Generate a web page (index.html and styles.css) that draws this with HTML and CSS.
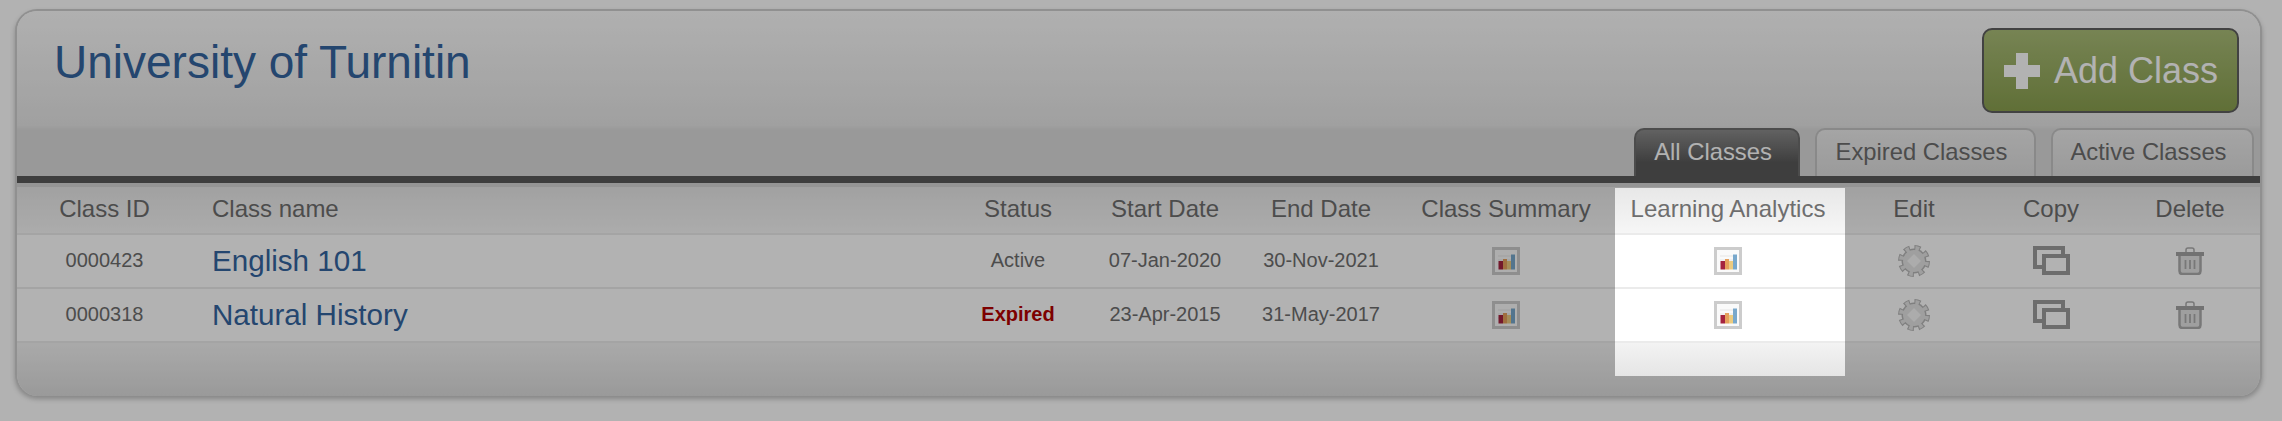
FILE: index.html
```html
<!DOCTYPE html>
<html lang="en">
<head>
  <meta charset="UTF-8" />
  <title>University of Turnitin</title>
  <link rel="stylesheet" href="styles.css">
</head>
<body>
  <svg class="defs" width="0" height="0">
    <symbol id="chart" viewBox="0 0 28 28">
      <rect x="1.5" y="1.5" width="25" height="25" fill="#fafafa" stroke="#cccccc" stroke-width="3"/>
      <path d="M6 9h16M6 13h16M6 17h16" stroke="#e6e6e6" stroke-width="1"/>
      <rect x="6.5" y="14" width="4.5" height="8.5" fill="#a5233f"/>
      <rect x="11" y="12" width="4" height="10.5" fill="#e6a05c"/>
      <rect x="15" y="14" width="4" height="8.5" fill="#eccb80"/>
      <rect x="19" y="7.5" width="4" height="15" fill="#78a8cc"/>
    </symbol>
    <symbol id="gear" viewBox="0 0 32 32">
      <circle cx="16" cy="16" r="12.5" fill="none" stroke="#b7b7b7" stroke-width="7" stroke-dasharray="5.6 4.22"/>
      <circle cx="16" cy="16" r="12.5" fill="#b7b7b7" stroke="#e4e4e4" stroke-width="5" stroke-dasharray="3.6 6.22" stroke-dashoffset="-1"/>
      <circle cx="16" cy="16" r="11" fill="#e4e4e4"/>
      <path d="M16 9l7 7-7 7-7-7z" fill="#f6f6f6"/>
    </symbol>
    <symbol id="copy" viewBox="0 0 37 29">
      <path d="M9 21H2V2h28v6" fill="none" stroke="#9c9c9c" stroke-width="4"/>
      <rect x="11" y="10" width="24" height="17" fill="none" stroke="#9c9c9c" stroke-width="4"/>
    </symbol>
    <symbol id="trash" viewBox="0 0 28 28">
      <path d="M10 5V3q0-2 2-2h4q2 0 2 2v2" fill="none" stroke="#acacac" stroke-width="1.5"/>
      <rect x="0" y="5" width="28" height="4" fill="#a4a4a4"/>
      <path d="M3.5 9v15q0 3 3 3h15q3 0 3-3V9" fill="#e4e4e4" stroke="#acacac" stroke-width="2.5"/>
      <path d="M9.5 13v9M14 13v9M18.5 13v9" stroke="#acacac" stroke-width="1.8"/>
    </symbol>
  </svg>

  <div class="panel">
    <div class="panel-head">
      <div class="title-row">
        <h1>University of Turnitin</h1>
        <a class="add-btn" href="#"><span class="plus"></span>Add Class</a>
      </div>
      <div class="tabs">
        <a class="tab active" href="#">All Classes</a>
        <a class="tab tab-expired" href="#">Expired Classes</a>
        <a class="tab tab-current" href="#">Active Classes</a>
      </div>
    </div>

    <table class="classes">
      <colgroup>
        <col class="c-id"><col class="c-name"><col class="c-status"><col class="c-start"><col class="c-end">
        <col class="c-summary"><col class="c-analytics"><col class="c-edit"><col class="c-copy"><col class="c-delete">
      </colgroup>
      <thead>
        <tr>
          <th>Class ID</th>
          <th class="name">Class name</th>
          <th>Status</th>
          <th>Start Date</th>
          <th>End Date</th>
          <th>Class Summary</th>
          <th>Learning Analytics</th>
          <th>Edit</th>
          <th>Copy</th>
          <th>Delete</th>
        </tr>
      </thead>
      <tbody>
        <tr>
          <td>0000423</td>
          <td class="name"><a href="#">English 101</a></td>
          <td>Active</td>
          <td>07-Jan-2020</td>
          <td>30-Nov-2021</td>
          <td><svg class="ico-chart"><use href="#chart"/></svg></td>
          <td><svg class="ico-chart"><use href="#chart"/></svg></td>
          <td><svg class="ico-gear"><use href="#gear"/></svg></td>
          <td><svg class="ico-copy"><use href="#copy"/></svg></td>
          <td><svg class="ico-trash"><use href="#trash"/></svg></td>
        </tr>
        <tr>
          <td>0000318</td>
          <td class="name"><a href="#">Natural History</a></td>
          <td class="expired">Expired</td>
          <td>23-Apr-2015</td>
          <td>31-May-2017</td>
          <td><svg class="ico-chart"><use href="#chart"/></svg></td>
          <td><svg class="ico-chart"><use href="#chart"/></svg></td>
          <td><svg class="ico-gear"><use href="#gear"/></svg></td>
          <td><svg class="ico-copy"><use href="#copy"/></svg></td>
          <td><svg class="ico-trash"><use href="#trash"/></svg></td>
        </tr>
      </tbody>
    </table>
    <div class="panel-foot"></div>
  </div>

  <!-- dims everything on the page except the column it sits over -->
  <div class="spotlight"></div>
</body>
</html>
```

FILE: styles.css
```css
html, body {
  height: 100%;
}
body {
  margin: 0;
  padding: 9px 20px 0 15px;
  box-sizing: border-box;
  overflow: hidden;
  background: #fff;
  font-family: "Liberation Sans", Arial, sans-serif;
  color: #6e6e6e;
}
a {
  text-decoration: none;
}
.defs {
  position: absolute;
}

/* panel */
.panel {
  height: 387px;
  box-sizing: border-box;
  border: 2px solid #cfcfcf;
  border-bottom: none;
  border-radius: 22px;
  overflow: hidden;
  box-shadow: 0 3px 5px rgba(0,0,0,0.25);
  background: #fff;
}
.panel-head {
  height: 165px;
  padding-top: 17px;
  box-sizing: border-box;
  background: linear-gradient(#fcfcfc 0, #e6e6e6 114px, #dcdcdc 119px, #dbdbdb 100%);
}
.title-row {
  display: flex;
  justify-content: space-between;
  align-items: flex-start;
  padding: 0 21px 0 37px;
}
h1 {
  margin: 8px 0 0;
  font-size: 46px;
  line-height: 52px;
  font-weight: normal;
  color: #34659f;
}
.add-btn {
  display: flex;
  align-items: center;
  box-sizing: border-box;
  width: 257px;
  height: 85px;
  padding-left: 20px;
  border: 2px solid #5f5f5f;
  border-radius: 10px;
  background: linear-gradient(#aabd78, #8aa04f);
  color: #fff;
  font-size: 36px;
}
.plus {
  position: relative;
  width: 36px;
  height: 36px;
  margin-right: 14px;
}
.plus::before, .plus::after {
  content: "";
  position: absolute;
  background: #fff;
}
.plus::before {
  left: 12px;
  top: 0;
  width: 12px;
  height: 36px;
}
.plus::after {
  left: 0;
  top: 12px;
  width: 36px;
  height: 12px;
}

/* tabs */
.tabs {
  display: flex;
  justify-content: flex-end;
  gap: 15px;
  margin-top: 15px;
  padding-right: 6px;
}
.tab {
  display: flex;
  align-items: center;
  justify-content: center;
  box-sizing: border-box;
  height: 48px;
  padding: 0 8px 2px 0;
  border: 2px solid #c4c4c4;
  border-bottom: none;
  border-radius: 10px 10px 0 0;
  background: linear-gradient(#ececec, #dedede);
  color: #6e6e6e;
  font-size: 23.8px;
}
.tab.active {
  width: 166px;
  border-color: #6e6e6e;
  background: linear-gradient(#8c8c8c, #5a5a5a 70%);
  color: #fff;
}
.tab-expired {
  width: 221px;
}
.tab-current {
  width: 203px;
}

/* table */
.classes {
  width: 100%;
  table-layout: fixed;
  border-collapse: collapse;
  border-top: 7px solid #5a5a5a;
}
.c-id { width: 175px; }
.c-name { width: 748px; }
.c-status { width: 156px; }
.c-start { width: 138px; }
.c-end { width: 174px; }
.c-summary { width: 196px; }
.c-analytics { width: 248px; }
.c-edit { width: 124px; }
.c-copy { width: 150px; }
th {
  height: 54px;
  padding: 3px 0 0;
  box-sizing: border-box;
  font-size: 24px;
  font-weight: normal;
  text-align: center;
  color: #6e6e6e;
  border-bottom: 2px solid #ebebeb;
  background: linear-gradient(#e6e6e6, #f6f6f6);
  box-shadow: inset 0 4px 0 #d6d6d6;
}
td {
  height: 54px;
  padding: 0;
  box-sizing: border-box;
  font-size: 20px;
  text-align: center;
  color: #6e6e6e;
  border-bottom: 2px solid #ebebeb;
  background: #fff;
}
th:last-child, td:last-child {
  padding-right: 6px;
}
th.name, td.name {
  padding-left: 20px;
  text-align: left;
}
td.name a {
  font-size: 29.6px;
  color: #34659f;
}
td.expired {
  font-weight: bold;
  color: #b30000;
}
td svg {
  display: block;
  margin: 0 auto;
}
.ico-chart {
  width: 28px;
  height: 28px;
}
.ico-gear {
  width: 32px;
  height: 32px;
}
.ico-copy {
  width: 37px;
  height: 29px;
}
.ico-trash {
  width: 28px;
  height: 28px;
}
.panel-foot {
  height: 54px;
  background: linear-gradient(#f3f3f3, #dcdcdc);
}

/* overlay */
.spotlight {
  position: absolute;
  left: 1615px;
  top: 188px;
  width: 230px;
  height: 188px;
  box-shadow: 0 0 0 3000px rgba(0,0,0,0.3);
  pointer-events: none;
}
```
